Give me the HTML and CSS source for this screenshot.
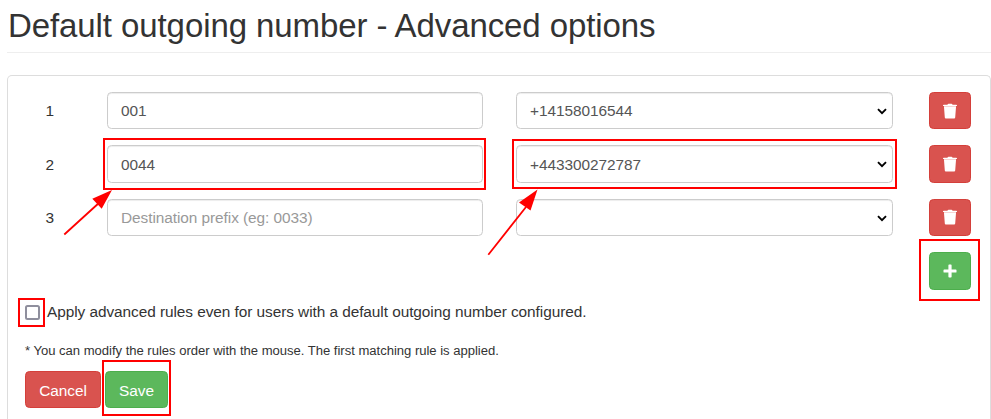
FILE: index.html
```html
<!DOCTYPE html>
<html lang="en">
<head>
<meta charset="utf-8">
<title>Default outgoing number - Advanced options</title>
<link rel="stylesheet" href="styles.css">
</head>
<body>
<svg class="defs" width="0" height="0" aria-hidden="true">
  <symbol id="trash" viewBox="0 0 14 16"><path d="M0 2.4Q0 1.7 .8 1.7H4.4Q4.8 .7 5.6 .7H8.4Q9.2 .7 9.6 1.7H13.2Q14 1.7 14 2.4V3.1H0ZM1 4H13L12.2 14.6Q12.1 15.5 11.2 15.5H2.8Q1.9 15.5 1.8 14.6Z"/><path d="M1 3H13V4.1H1Z" opacity=".75"/></symbol>
  <symbol id="plus" viewBox="0 0 14 14"><path d="M5.4 1.2Q5.4.5 6.1.5H7.9Q8.6.5 8.6 1.2V5.6H12.8Q13.5 5.6 13.5 6.2V7.9Q13.5 8.5 12.8 8.5H8.6V12.8Q8.6 13.5 7.9 13.5H6.1Q5.4 13.5 5.4 12.8V8.5H1.2Q.5 8.5 .5 7.9V6.2Q.5 5.6 1.2 5.6H5.4Z"/></symbol>
  <symbol id="chevron" viewBox="0 0 10 7"><path d="M1 1.2L5 5.2L9 1.2" fill="none" stroke="#000" stroke-width="1.9"/></symbol>
</svg>
<h2 class="title">Default outgoing number - Advanced options</h2>
<main class="panel">
  <div class="rules">
    <span class="num">1</span>
    <input class="control" value="001">
    <div class="select"><select class="control"><option>+14158016544</option></select><svg class="caret"><use href="#chevron"/></svg></div>
    <button class="btn danger icon"><svg class="trash"><use href="#trash"/></svg></button>
    <span class="num second">2</span>
    <input class="control" value="0044">
    <div class="select"><select class="control"><option>+443300272787</option></select><svg class="caret"><use href="#chevron"/></svg></div>
    <button class="btn danger icon"><svg class="trash"><use href="#trash"/></svg></button>
    <span class="num">3</span>
    <input class="control" placeholder="Destination prefix (eg: 0033)">
    <div class="select"><select class="control"><option></option></select><svg class="caret"><use href="#chevron"/></svg></div>
    <button class="btn danger icon"><svg class="trash"><use href="#trash"/></svg></button>
    <button class="btn success icon add"><svg class="plus"><use href="#plus"/></svg></button>
  </div>
  <label class="check"><input class="box" type="checkbox"><span class="check-text">Apply advanced rules even for users with a default outgoing number configured.</span></label>
  <p class="note">* You can modify the rules order with the mouse. The first matching rule is applied.</p>
  <div class="actions">
    <button class="btn danger cancel">Cancel</button>
    <button class="btn success save">Save</button>
  </div>
</main>
<svg class="annotations" width="991" height="419" viewBox="0 0 991 419" aria-hidden="true">
  <g fill="none" stroke="#f00" stroke-width="2">
    <rect x="104" y="139" width="381" height="50"/>
    <rect x="513" y="140" width="383" height="48"/>
    <rect x="920" y="240" width="59" height="60"/>
    <rect x="19" y="299" width="25" height="27"/>
    <rect x="103" y="361" width="67" height="54"/>
    <path stroke-width="1.8" d="M64.3 234.5L100 202M488.3 254.7L526 207"/>
  </g>
  <path fill="#f00" d="M112 190L92.3 198.8L101.7 208.7ZM537.5 189.5L519 202.5L530.5 210.5Z"/>
</svg>
</body>
</html>
```
FILE: styles.css
```css
* { box-sizing: border-box; }
html { height: 419px; overflow: hidden; }
body {
  margin: 0;
  height: 419px;
  overflow: hidden;
  padding-left: 7px;
  background: #fff;
  color: #333;
  font: 15.4px/22px "Liberation Sans", Arial, sans-serif;
  letter-spacing: -.06px;
}
.defs, .annotations { position: absolute; top: 0; left: 0; pointer-events: none; }
.title {
  margin: 0 0 22px;
  height: 53px;
  padding: 8px 0 0 1px;
  border-bottom: 1px solid #eee;
  font-size: 33px;
  line-height: 36px;
  font-weight: 400;
  letter-spacing: -.09px;
  white-space: nowrap;
}
.panel {
  height: 344px;
  padding: 16px 19px 0 17px;
  border: 1px solid #ddd;
  border-bottom: 0;
  border-radius: 5px 5px 0 0;
}
.rules {
  display: grid;
  grid-template-columns: 49px 376px 377px 42px;
  grid-auto-rows: 37.4px;
  column-gap: 33px;
  row-gap: 16px;
}
.rules .select + .btn { margin-left: 3px; }
.num { line-height: 38.6px; padding-left: 20.5px; }
.num.second { line-height: 39.4px; }
.control {
  display: block;
  width: 100%;
  height: 100%;
  margin: 0;
  padding: 1px 13px 0;
  border: 1px solid #ccc;
  border-radius: 4.5px;
  background: #fff;
  box-shadow: inset 0 1px 1px rgba(0, 0, 0, .075);
  color: #555;
  font: inherit;
  letter-spacing: inherit;
  appearance: none;
}
.control::placeholder { color: #999; opacity: 1; }
.select { position: relative; }
.caret { position: absolute; right: 6px; top: 16px; width: 10px; height: 7px; }
.btn {
  display: flex;
  align-items: center;
  justify-content: center;
  height: 37.4px;
  margin: 0;
  padding: 3.5px 0 0;
  border: 1px solid;
  border-radius: 4.5px;
  color: #fff;
  font: inherit;
  letter-spacing: inherit;
}
.danger { background: #d9534f; border-color: #d43f3a; }
.success { background: #5cb85c; border-color: #4cae4c; }
.icon { width: 42px; padding: 0; }
.icon svg { fill: #fff; }
.trash { width: 14px; height: 16px; }
.plus { width: 14px; height: 14px; }
.add { grid-column: 4; margin-left: 3px; }
.check { display: flex; align-items: flex-start; height: 22px; margin-top: 11px; }
.box {
  appearance: none;
  width: 15px;
  height: 15px;
  margin: 4px 7px 0 0;
  border: 2px solid #8f8f9d;
  border-radius: 2.5px;
  background: #fff;
}
.note { margin: 18px 0 0; height: 20px; font-size: 13.09px; line-height: 20px; letter-spacing: -.025px; }
.actions { display: flex; gap: 4px; margin-top: 10px; }
.cancel { width: 76px; }
.save { width: 63px; }
```
